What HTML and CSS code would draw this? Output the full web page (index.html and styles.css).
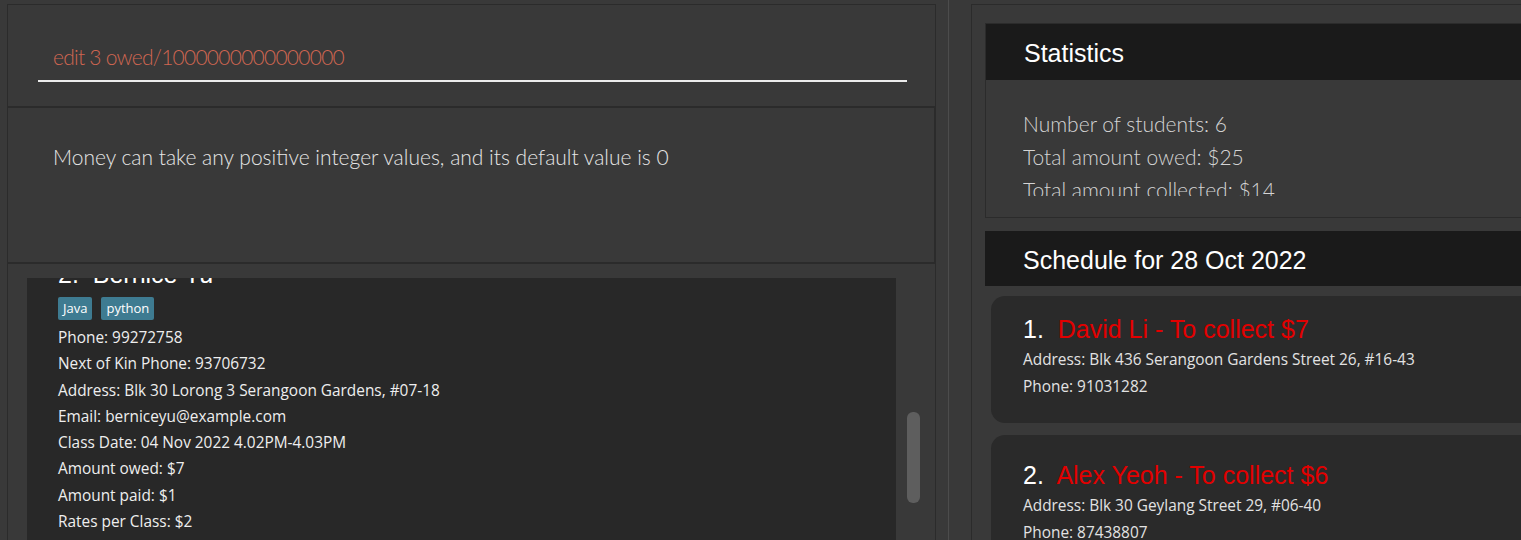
FILE: index.html
```html
<!DOCTYPE html>
<html lang="en">
<head>
<meta charset="utf-8">
<title>TutorBook</title>
<link rel="stylesheet" href="styles.css">
</head>
<body>
<div class="app">
  <section class="left-pane">
    <div class="command-box">
      <div class="command-field"><span class="command-text error">edit 3 owed/1000000000000000</span></div>
    </div>
    <div class="result-box">
      <p class="result-text">Money can take any positive integer values, and its default value is 0</p>
    </div>
    <div class="list-panel">
      <div class="list-viewport">
        <div class="person-card">
          <div class="person-name">2.&nbsp; Bernice Yu</div>
          <div class="tags"><span class="tag">Java</span><span class="tag">python</span></div>
          <div class="fields">
            <div class="field">Phone: 99272758</div>
            <div class="field">Next of Kin Phone: 93706732</div>
            <div class="field">Address: Blk 30 Lorong 3 Serangoon Gardens, #07-18</div>
            <div class="field">Email: berniceyu@example.com</div>
            <div class="field">Class Date: 04 Nov 2022 4.02PM-4.03PM</div>
            <div class="field">Amount owed: $7</div>
            <div class="field">Amount paid: $1</div>
            <div class="field">Rates per Class: $2</div>
          </div>
        </div>
      </div>
      <div class="scrollbar"><div class="scroll-thumb"></div></div>
    </div>
  </section>
  <div class="divider"></div>
  <section class="right-pane">
    <div class="stats">
      <div class="panel-header">Statistics</div>
      <div class="stats-body">
        <div class="stats-viewport">
          <p class="stat-line">Number of students: 6</p>
          <p class="stat-line">Total amount owed: $25</p>
          <p class="stat-line">Total amount collected: $14</p>
        </div>
      </div>
    </div>
    <div class="schedule">
      <div class="panel-header schedule-header">Schedule for 28 Oct 2022</div>
      <div class="schedule-list">
        <div class="schedule-card first">
          <div class="schedule-title"><span class="index">1.&nbsp; </span><span class="due">David Li - To collect $7</span></div>
          <div class="field">Address: Blk 436 Serangoon Gardens Street 26, #16-43</div>
          <div class="field">Phone: 91031282</div>
        </div>
        <div class="schedule-card">
          <div class="schedule-title"><span class="index">2.&nbsp; </span><span class="due">Alex Yeoh - To collect $6</span></div>
          <div class="field">Address: Blk 30 Geylang Street 29, #06-40</div>
          <div class="field">Phone: 87438807</div>
        </div>
      </div>
    </div>
  </section>
</div>
</body>
</html>
```

FILE: styles.css
```css
* { box-sizing: border-box; }
html, body {
  margin: 0;
  padding: 0;
  width: 1521px;
  height: 540px;
  overflow: hidden;
  background: #393939;
  font-family: "Open Sans", "Noto Sans", sans-serif;
}
p { margin: 0; }

.app {
  display: flex;
  height: 540px;
  padding-top: 4px;
}

/* ---------- left pane ---------- */
.left-pane {
  width: 929px;
  margin-left: 7px;
  display: flex;
  flex-direction: column;
  border-left: 1px solid #2b2b2b;
  border-right: 1px solid #2b2b2b;
  border-top: 1px solid #2b2b2b;
  flex: none;
}

.command-box {
  height: 101px;
  padding: 39px 0 0 30px;
}
.command-field {
  width: 869px;
  padding: 0 0 10px 15px;
  border-bottom: 2px solid #ececec;
}
.command-text {
  display: block;
  font-family: Lato, "Open Sans", sans-serif;
  font-weight: 300;
  font-size: 21px;
  line-height: 26px;
  letter-spacing: -0.75px;
  color: #d06651;
}

.result-box {
  height: 158px;
  border-top: 2px solid #2b2b2b;
  border-bottom: 2px solid #2b2b2b;
  border-right: 1px solid #2b2b2b;
  padding: 36px 0 0 45px;
}
.result-text {
  font-family: Lato, "Open Sans", sans-serif;
  font-weight: 300;
  font-size: 21px;
  line-height: 26px;
  color: #e6e6e6;
}

.list-panel {
  flex: 1;
  display: flex;
  padding: 14px 0 0 19px;
  gap: 11px;
  min-height: 0;
}
.list-viewport {
  width: 869px;
  overflow: hidden;
  background: #282828;
}
.person-card {
  margin-top: -19px;
  padding-left: 31px;
}
.person-name {
  font-family: "Liberation Sans", Arial, sans-serif;
  font-size: 25px;
  line-height: 30px;
  color: #ffffff;
}
.tags {
  display: flex;
  gap: 9px;
  margin-top: 8px;
}
.tag {
  height: 23px;
  line-height: 23px;
  padding: 0 5px;
  background: #3e7b91;
  border-radius: 2px;
  color: #ffffff;
  font-size: 13px;
}
.fields { margin-top: 5px; }
.field {
  font-size: 15.4px;
  line-height: 26.3px;
  color: #eeeeee;
  white-space: nowrap;
}

.scrollbar {
  width: 13px;
  padding-top: 134px;
}
.scroll-thumb {
  height: 91px;
  background: #5e5e5e;
  border-radius: 6px;
}

/* ---------- divider ---------- */
.divider {
  width: 1px;
  flex: none;
  margin: -4px 22px 0 12px;
  background: #4c4c4c;
}

/* ---------- right pane ---------- */
.right-pane {
  width: 620px;
  flex: none;
  border-left: 1px solid #2b2b2b;
  border-top: 1px solid #2b2b2b;
  padding: 18px 0 0 13px;
}

.stats {
  border: 1px solid #2b2b2b;
}
.panel-header {
  height: 56px;
  display: flex;
  align-items: center;
  padding: 3px 0 0 38px;
  background: #1a1a1a;
  color: #ffffff;
  font-family: "Liberation Sans", Arial, sans-serif;
  font-size: 25px;
}
.stats-body {
  height: 137px;
  padding: 27px 0 0 37px;
}
.stats-viewport {
  height: 89px;
  overflow: hidden;
}
.stat-line {
  font-family: Lato, "Open Sans", sans-serif;
  font-weight: 300;
  font-size: 21px;
  line-height: 33px;
  color: #d4d4d4;
}

.schedule { margin-top: 13px; }
.schedule-header {
  height: 55px;
  padding: 3px 0 0 38px;
}
.schedule-list {
  padding: 10px 0 0 6px;
  display: flex;
  flex-direction: column;
  gap: 12px;
}
.schedule-card {
  background: #2a2a2a;
  border-radius: 14px;
  padding: 25px 0 23px 32px;
}
.schedule-card.first { padding-top: 18px; }
.schedule-title {
  font-family: "Liberation Sans", Arial, sans-serif;
  font-size: 25px;
  line-height: 30px;
  margin-bottom: 2px;
}
.schedule-title .index { color: #ffffff; }
.schedule-title .due { color: #e20000; }
.schedule-card .field {
  line-height: 27px;
  color: #e2e2e2;
}
```
